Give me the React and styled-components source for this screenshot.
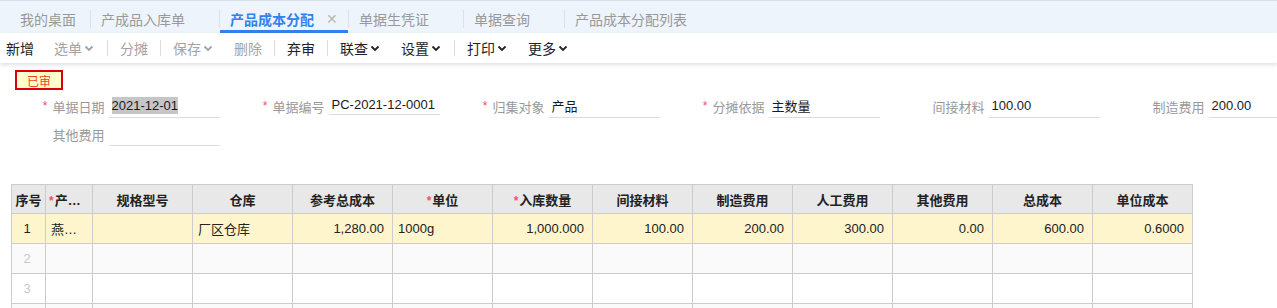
import React from 'react';
import styled, { createGlobalStyle } from 'styled-components';

const GlobalStyle = createGlobalStyle`
  html, body {
    margin: 0;
    padding: 0;
    background: #fff;
    overflow: hidden;
    font-family: "Liberation Sans", "Noto Sans CJK SC", sans-serif;
  }
`;

const Page = styled.div`
  width: 1277px;
  height: 308px;
  overflow: hidden;
`;

const TabBar = styled.div`
  display: flex;
  height: 32px;
  padding-left: 10px;
  background: #eef4fc;
  border-top: 1px solid #dcdfe4;
`;

const Tab = styled.div`
  display: flex;
  align-items: center;
  box-sizing: border-box;
  width: ${(p) => p.$w}px;
  height: 32px;
  padding: 6px 0 0 10px;
  font-size: 14px;
  font-weight: ${(p) => (p.$active ? 700 : 400)};
  color: ${(p) => (p.$active ? '#3381f0' : '#999')};
  border-bottom: 3px solid ${(p) => (p.$active ? '#3381f0' : 'transparent')};
  white-space: nowrap;
`;

const Close = styled.span`
  margin-left: 12px;
  font-size: 14px;
  font-weight: 400;
  color: #b8b8b8;
`;

const TabSep = styled.div`
  width: 1px;
  height: 18px;
  margin-top: 9px;
  background: #dbe2ec;
`;

const Toolbar = styled.div`
  position: relative;
  z-index: 1;
  display: flex;
  align-items: center;
  height: 30px;
  background: #fff;
  box-shadow: 0 2px 4px rgba(0, 0, 0, 0.12);
`;

const ToolBtn = styled.div`
  display: flex;
  align-items: center;
  padding: 0 10px;
  margin-left: ${(p) => (p.$first ? '-4px' : '0')};
  font-size: 14px;
  color: ${(p) => (p.$off ? '#a3a3a3' : '#222')};
  white-space: nowrap;
`;

const ToolSep = styled.div`
  width: 1px;
  height: 16px;
  margin: 0 2px;
  background: #dcdcdc;
`;

const Chevron = ({ color }) => (
  <svg width="12" height="12" viewBox="0 0 12 12" style={{ marginLeft: 1 }}>
    <path d="M2.5 4.5 L6 8 L9.5 4.5" fill="none" stroke={color} strokeWidth="1.8" />
  </svg>
);

const StatusRow = styled.div`
  padding: 7px 0 0 15px;
  height: 20px;
`;

const Badge = styled.div`
  box-sizing: border-box;
  width: 48px;
  height: 20px;
  display: flex;
  align-items: center;
  justify-content: center;
  border: 2px solid #d8000c;
  background: #ffffcc;
  color: #f0401c;
  font-size: 12px;
`;

const Form = styled.div`
  display: grid;
  grid-template-columns: repeat(6, 220px);
  grid-auto-rows: 28px;
  margin-top: 4px;
  overflow: hidden;
`;

const Field = styled.div`
  display: flex;
  align-items: flex-start;
`;

const Label = styled.div`
  box-sizing: border-box;
  width: 110px;
  height: 24px;
  padding-right: 4px;
  display: flex;
  align-items: center;
  justify-content: flex-end;
  font-size: 13px;
  color: #999;
  white-space: nowrap;
`;

const Star = styled.span`
  color: #f5506a;
  font-size: 12px;
  margin-right: ${(p) => p.$gap || 5}px;
`;

const Input = styled.div`
  box-sizing: border-box;
  width: 113px;
  height: ${(p) => (p.$short ? 21 : 24)}px;
  padding: 0 0 0 3px;
  display: flex;
  align-items: center;
  border-bottom: 1px solid #dcdcdc;
  font-size: 13px;
  color: #1a1a1a;
  white-space: nowrap;
`;

const Selected = styled.span`
  background: #c6c6c6;
  line-height: 17px;
`;

const Table = styled.table`
  margin: 34px 0 0 11px;
  border-collapse: collapse;
  table-layout: fixed;
  width: 1181px;
  font-size: 13px;
`;

const Th = styled.th`
  height: 28px;
  padding: 0 3px;
  background: #e8e8e8;
  border: 1px solid #cccccc;
  font-weight: 700;
  color: #222;
  text-align: center;
  white-space: nowrap;
  overflow: hidden;
  text-overflow: ellipsis;
`;

const Tr = styled.tr`
  background: ${(p) => p.$bg};
`;

const Td = styled.td`
  height: 29px;
  padding: 0 8px 0 5px;
  border: 1px solid #cccccc;
  color: ${(p) => (p.$muted ? '#c8c8c8' : '#222')};
  text-align: ${(p) => p.$align || 'left'};
  white-space: nowrap;
  overflow: hidden;
  text-overflow: ellipsis;
`;

const tabs = [
  { label: '我的桌面', w: 80 },
  { label: '产成品入库单', w: 128 },
  { label: '产品成本分配', w: 128, active: true },
  { label: '单据生凭证', w: 114 },
  { label: '单据查询', w: 100 },
  { label: '产品成本分配列表', w: 160 },
];

const tools = [
  { label: '新增' },
  { label: '选单', off: true, menu: true, sep: true },
  { label: '分摊', off: true, sep: true },
  { label: '保存', off: true, menu: true },
  { label: '删除', off: true, sep: true },
  { label: '弃审', sep: true },
  { label: '联查', menu: true },
  { label: '设置', menu: true, sep: true },
  { label: '打印', menu: true },
  { label: '更多', menu: true },
];

const fields = [
  { label: '单据日期', req: true, value: <Selected>2021-12-01</Selected> },
  { label: '单据编号', req: true, value: 'PC-2021-12-0001', short: true },
  { label: '归集对象', req: true, value: '产品' },
  { label: '分摊依据', req: true, value: '主数量' },
  { label: '间接材料', value: '100.00' },
  { label: '制造费用', value: '200.00' },
  { label: '其他费用', value: '' },
];

const columns = [
  { title: '序号', w: 34 },
  { title: '产品名称', w: 47, req: true },
  { title: '规格型号', w: 100 },
  { title: '仓库', w: 100 },
  { title: '参考总成本', w: 100 },
  { title: '单位', w: 100, req: true },
  { title: '入库数量', w: 100, req: true },
  { title: '间接材料', w: 100 },
  { title: '制造费用', w: 100 },
  { title: '人工费用', w: 100 },
  { title: '其他费用', w: 100 },
  { title: '总成本', w: 100 },
  { title: '单位成本', w: 100 },
];

const firstRow = ['燕麦片', '', '厂区仓库', '1,280.00', '1000g', '1,000.000', '100.00', '200.00', '300.00', '0.00', '600.00', '0.6000'];
const rightCols = [3, 5, 6, 7, 8, 9, 10, 11];

export default function App() {
  return (
    <Page>
      <GlobalStyle />
      <TabBar>
        {tabs.map((t, i) => (
          <React.Fragment key={t.label}>
            {i > 0 && <TabSep />}
            <Tab $w={t.w} $active={t.active}>
              {t.label}
              {t.active && <Close>✕</Close>}
            </Tab>
          </React.Fragment>
        ))}
      </TabBar>
      <Toolbar>
        {tools.map((t, i) => (
          <React.Fragment key={t.label}>
            <ToolBtn $off={t.off} $first={i === 0}>
              {t.label}
              {t.menu && <Chevron color={t.off ? '#a3a3a3' : '#222'} />}
            </ToolBtn>
            {t.sep && <ToolSep />}
          </React.Fragment>
        ))}
      </Toolbar>
      <StatusRow>
        <Badge>已审</Badge>
      </StatusRow>
      <Form>
        {fields.map((f) => (
          <Field key={f.label}>
            <Label>
              {f.req && <Star>*</Star>}
              {f.label}
            </Label>
            <Input $short={f.short}>{f.value}</Input>
          </Field>
        ))}
      </Form>
      <Table>
        <colgroup>
          {columns.map((c) => (
            <col key={c.title} style={{ width: c.w }} />
          ))}
        </colgroup>
        <thead>
          <tr>
            {columns.map((c) => (
              <Th key={c.title}>
                {c.req && <Star $gap={1}>*</Star>}
                {c.title}
              </Th>
            ))}
          </tr>
        </thead>
        <tbody>
          <Tr $bg="#fff5cc">
            <Td $align="center">1</Td>
            {firstRow.map((v, i) => (
              <Td key={i} $align={rightCols.includes(i) ? 'right' : 'left'}>
                {v}
              </Td>
            ))}
          </Tr>
          {[2, 3, 4].map((n) => (
            <Tr key={n} $bg={n % 2 === 0 ? '#fafafa' : '#fff'}>
              <Td $align="center" $muted>
                {n < 4 ? n : ''}
              </Td>
              {firstRow.map((_, i) => (
                <Td key={i} />
              ))}
            </Tr>
          ))}
        </tbody>
      </Table>
    </Page>
  );
}
